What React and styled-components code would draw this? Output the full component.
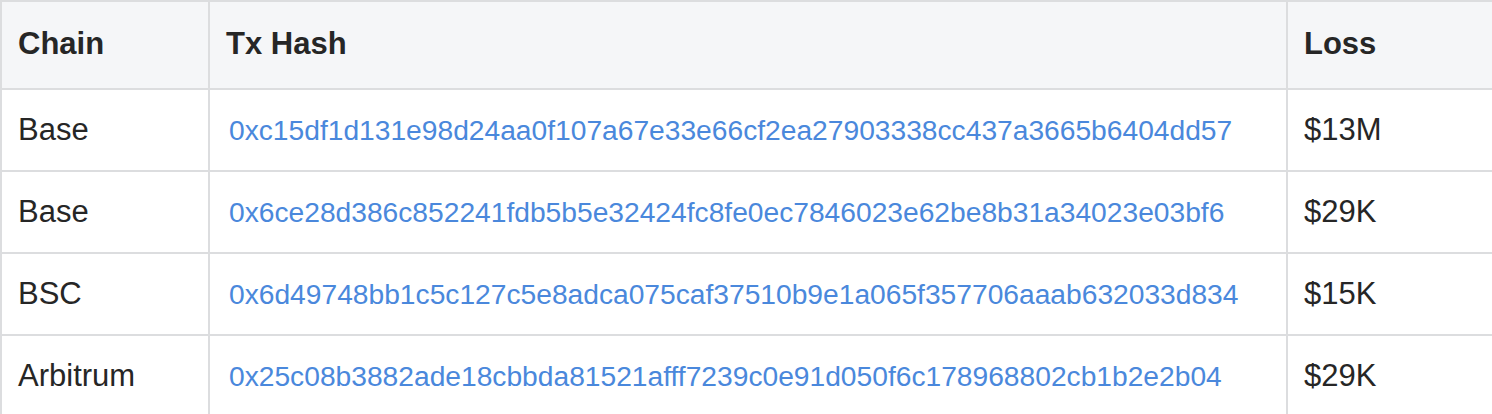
import React from 'react';
import styled, { createGlobalStyle } from 'styled-components';

const GlobalStyle = createGlobalStyle`
  body {
    margin: 0;
    background: #ffffff;
    font-family: "Liberation Sans", Arial, sans-serif;
  }
`;

const Table = styled.table`
  width: 1492px;
  border-collapse: collapse;
  table-layout: fixed;
  color: #262626;
`;

const HeadCell = styled.th`
  height: 88px;
  padding: 0 16px 2px;
  text-align: left;
  font-size: 31px;
  font-weight: 700;
  background-color: #f5f6f8;
  border: 2px solid #dcdddf;
  box-sizing: border-box;
`;

const Row = styled.tr`
  height: 82px;
`;

const Cell = styled.td`
  padding: 0 16px;
  font-size: 31px;
  border: 2px solid #dcdddf;
  box-sizing: border-box;
  white-space: nowrap;
`;

const HashLink = styled.a`
  color: #4a88dc;
  text-decoration: none;
  font-size: 28.2px;
  padding-left: 3px;
`;

const rows = [
  { chain: 'Base', hash: '0xc15df1d131e98d24aa0f107a67e33e66cf2ea27903338cc437a3665b6404dd57', loss: '$13M' },
  { chain: 'Base', hash: '0x6ce28d386c852241fdb5b5e32424fc8fe0ec7846023e62be8b31a34023e03bf6', loss: '$29K' },
  { chain: 'BSC', hash: '0x6d49748bb1c5c127c5e8adca075caf37510b9e1a065f357706aaab632033d834', loss: '$15K' },
  { chain: 'Arbitrum', hash: '0x25c08b3882ade18cbbda81521afff7239c0e91d050f6c178968802cb1b2e2b04', loss: '$29K' },
];

const App = () => {
  return (
    <>
      <GlobalStyle />
      <Table>
        <colgroup>
          <col style={{ width: 208 }} />
          <col style={{ width: 1078 }} />
          <col style={{ width: 206 }} />
        </colgroup>
        <thead>
          <tr>
            <HeadCell>Chain</HeadCell>
            <HeadCell>Tx Hash</HeadCell>
            <HeadCell>Loss</HeadCell>
          </tr>
        </thead>
        <tbody>
          {rows.map(row => (
            <Row key={row.hash}>
              <Cell>{row.chain}</Cell>
              <Cell>
                <HashLink href="#">{row.hash}</HashLink>
              </Cell>
              <Cell>{row.loss}</Cell>
            </Row>
          ))}
        </tbody>
      </Table>
    </>
  );
};

export default App;
